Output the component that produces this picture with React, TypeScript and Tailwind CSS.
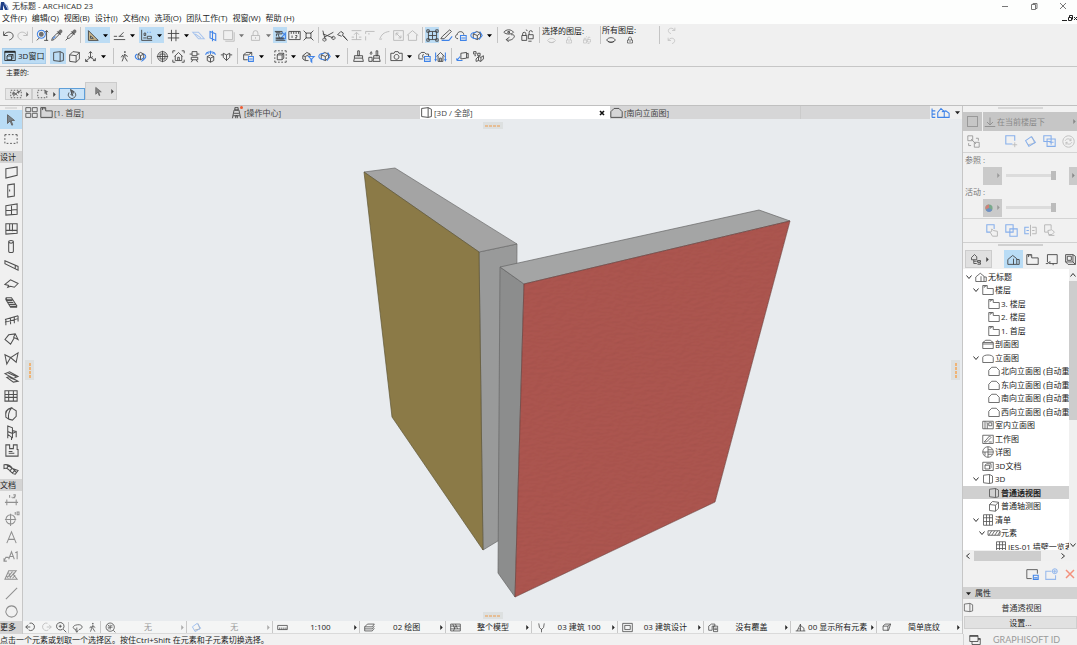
// src/App.tsx
import React from "react";
import clsx from "clsx";

// [main strokes, blue strokes, filled shapes]
const ICONS: Record<string, [string, string?, string?]> = {
  undo: ["M2 3v5h5M2.500 7.500C5 3.500 9 3 12 5c3 2.500 2 7-3 8.500"],
  redo: ["M14 3v5H9M13.500 7.500C11 3.500 7 3 4 5c-3 2.500-2 7 3 8.500"],
  find: ["M13 2v12M11 4l2-2 2 2M10 14h5M1 14l3-3", "M6.500 1.500a5 5 0 1 0 .1 0z", "M6.500 3.500a3 3 0 1 0 .1 0z"],
  dropper: ["M2 14l1-3 6-6 2 2-6 6zM9 3l4 4", "M3.500 12l3-3", "M9 4l3-3c2-1 4 1 3 3l-3 3z"],
  syringe: ["M2 14l3-3M4 10l5-5 2 2-5 5zM9 3l4 4", "", "M9 4l3-3c2-1 4 1 3 3l-3 3z"],
  setsquare: ["M3 2v12h12zM5.500 8.500v3H9z"],
  snap: ["M1 13h14M1 9h4M8 9l5-5M7 9h6"],
  coord: ["M2 1v13h13M5 5h2v3H5zM9 9h5v3H9zM4 11h4", "M9 4h1M12 4h1"],
  hash: ["M5.500 1v14M11 1v14M1 5.500h14M1 11h14"],
  planeH: ["", "M1 4h7l7 8H8zM4 6l7 5"],
  planeV: ["", "M5 3l7 3v8l-7-3zM8 2v13"],
  square: ["M2 2h11v11H2zM4 15h11V4"],
  lock: ["M3 8h10v6H3zM5 8V5a3 3 0 0 1 6 0v3M8 10v2"],
  trace: ["M1 3h9v3H3v3M3 12h10M2 14h12M5 6l2 6", "M10 4l4 4M14 4v8H8l6-7", "M2 10h10v3H2zM2 3h6v2H2z"],
  ruler: ["M1 3h14v10H1zM4 3v3M7 3v3M10 3v3M13 3v3M5 8v3M9 8h2v1.500L9 11h2"],
  collapse: ["M2 2l4 4M14 2l-4 4M2 14l4-4M14 14l-4-4M5 5h6v6H5z"],
  scissors: ["M1 2l3 11M1 6l13 5M14 4L3 10M3 11a2 2 0 1 0 .1 0zM14 9a2 2 0 1 0 .1 0z"],
  pick: ["M2 7l4-4 3 2-1 3 6 6M2 7l5 2M9 8l5 6"],
  elevate: ["M2 2h12M8 13V5M5 7l3-3 3 3M2 10h3M11 10h3M2 13h12"],
  corner: ["M2 6V3h11M2 14V9M5 6h2"],
  arc: ["M2 13C4 7 7 4 14 3M3 13l2-1"],
  resize: ["M2 2h12v12H2zM5 5l6 6M5 8V5h3M11 8v3H8"],
  home: ["M1 8l7-6 7 6M3 7v7h10V7"],
  group: ["M3 3h10v10H3zM1 1h3v3H1zM12 1h3v3h-3zM1 12h3v3H1zM12 12h3v3h-3zM8 3v10M3 8h10"],
  pens: ["M1 12h4l9-9-2-2-9 8z", "M2 14h9l4-5"],
  cloud: ["M5 12C1 12 1 7 4 7c0-5 8-5 8 0", "M8 8h7v6H8zM9 11h5"],
  orbit: ["M4 6l4-3 5 2v5l-4 3-5-2zM4 6l5 2 4-3M9 8v5", "M8 4c-5 0-7 2-7 4s3 4 7 4M12 3l3 5-4 5"],
  eyeSwap: ["M1 4c3-4 9-4 12 0-3 3-9 3-12 0zM6 3h2v2H6zM4 13c4 2 9 0 10-4 0-2-2-2-4-2M4 13l4-3M4 13l3 3"],
  lockSwap: ["M1 8h6v6H1zM2 8V6a2 2 0 0 1 4 0v2M9 7h6v5H9zM10 7V4a2 2 0 0 1 4 0M8 2L6 1M9 15h4"],
  eye: ["M1 8c3-5 11-5 14 0-3 5-11 5-14 0zM3 10c3 2 7 2 10 0"],
  window3d: ["M1 2h14v12H1zM4 8l2-2h6v5l-2 2H4zM4 8h6v5M10 8l2-2", "", "M1 1h14v3H1z"],
  perspective: ["M2 3l8-1v12l-8-1zM10 2l4 2v9l-4 1"],
  axono: ["M2 6l4-4 8 1v8l-4 4-8-1zM2 6l8 1v8M10 7l4-4"],
  axes: ["M8 9V2M6 4l2-2 2 2M8 9l-6 5M8 9l6 4M2 11v3h3M14 10v3h-3M5 8a4 4 0 0 0 6 0"],
  walk: ["M8 2h1v1H8zM8.500 5L6 9M8.500 5v4l3 5M7 9l-2 5M6 6L4 9M9 6l3 2"],
  orbitBox: ["M5 5l3-2 4 2v5l-4 2-3-2zM5 5l3 2 4-2M8 7v5", "M4 5C0 7 1 11 7 12M12 5c4 2 3 5-1 7M9 14l3-2-2-2"],
  target: ["M8 2a6 6 0 1 0 .1 0zM1 8h14M8 1v14M5 5h6v6H5z"],
  fitHome: ["M1 4V1h3M12 1h3v3M1 12v3h3M15 12v3h-3M3 8l5-5 5 5M4 7v6h8V7M7 13V9h2v4"],
  person: ["M5 2h6v5H5zM2 5h3M11 5h3M4 9h8v3H4zM6 12l-2 3M10 12l2 3"],
  lamp: ["M4 8l4-2 4 2v5l-4 2-4-2zM4 8l4 2 4-2M8 10v5", "M2 6C3 1 13 1 14 6M5 2v3M8 1v4M11 2v3"],
  section: ["M1 6h3M12 6h3M4 4l4 2 4-2v5l-4 4-4-4zM8 6v7"],
  cubeBlue: ["M2 6l3-3h7v4M2 6h6M2 6v6h5M8 6l4-3", "M8 8h6v6H8zM9 11h4"],
  dashedCube: ["M1 1h2M5 1h2M9 1h2M13 1h2v2M15 5v2M15 9v2M15 13v2h-2M11 15H9M7 15H5M3 15H1v-2M1 11V9M1 7V5M1 3V1M4 6l2-2h6v6l-2 2H4zM4 6h6v6M10 6l2-2"],
  filterHouse: ["M1 7l5-4 4 2v3M1 7l3 1v5l-3-2zM4 8l6-3M4 13h4", "M8 8h7l-3 3v4l-1-1v-3z"],
  brush: ["M7 1h2v6H7zM3 7h10v3H3zM3 10l-1 4h12l-1-4"],
  brushes: ["M4 2c-4 4 3 5 0 0zM10 1h2v6h-2zM7 7h7v3H7zM7 10l-1 4h9l-1-4M1 9h4v5H1z"],
  camera: ["M1 4h4l1-2h4l1 2h4v9H1zM8 5.500a3 3 0 1 0 .1 0z"],
  cameraBlue: ["M1 6l3-3h4l2 2h3v3M1 6v5h5M7 5a3 3 0 0 0 0 5", "M8 8h7v6H8zM9 11h5"],
  houseBlue: ["M3 8l5-5 5 5M5 7v7h6V7M7 14v-4h2v4", "M2 3v9M14 3v9M1 11l1 2 1-2M13 11l1 2 1-2"],
  camcorder: ["M6 4l7-1v7l-7 1zM13 5l2-1v6l-2-1", "M1 13l4-5M1 13h7M1 10v3"],
  cubes: ["M2 2h3v3H2zM7 4h3v3H7zM3 7h2M5 11l3-3 3 1 3-2v4l-3 3-3-1-3 1zM8 8v5M11 9v5"],
  marqueeCut: ["M1 3h2M5 3h2M9 3h2M13 3h2M1 13h2M5 13h2M9 13h2M13 13h2M1 5v2M1 9v2M15 5v2M15 9v2M4 5l6 5M4 11l7-6", "", "M3 6h3v3H3zM10 4h4l-3 4z"],
  marqueeArrow: ["M1 3h2M5 3h2M9 3h1M1 5v2M1 9v2M1 13h2M5 13h2M9 13h2M13 13v-2", "", "M10 2l5 3-2 1 1 3-2 0-1-2-1 1z"],
  magnet: ["M4 6a5 5 0 1 0 8 0M6 8l3 3M8 9L6 2l5 3z", "", "M6 2l5 3-3 2 2 3-1 1-2-4z"],
  grid4: ["M1 2h6v5H1zM9 2h6v5H9zM1 9h6v5H1zM9 9h6v5H9z"],
  story: ["M1 2h6v4h8v8H1zM3 2v3M5 2v2"],
  tower: ["M6 2h4v3H6zM5 5h6l2 10M5 5L3 15M5 9h6M4 12h8M7 15v-3h2v3"],
  elevation: ["M1 7c1-4 13-4 14 0v7H1z"],
  elevHouse: ["M1 7l4-4h6l4 4v7H1z"],
  sectionIcon: ["M1 6l4-3h6l4 3v8H1zM1 6h14M1 8h14"],
  homes: ["M1 8l6-5 5 4v7H1zM8 7v7M12 8h3v6h-3"],
  homesBlue: ["", "M-3 3v11M-3 6h4M-3 10h4M-3 14h4M4 14V8l4-5 4 4v7zM9 7l5-1 4 3v5h-6"],
  marquee: ["M1 3h2M5 3h2M9 3h2M13 3h2v2M15 7v2M15 11v2M13 13h-2M9 13H7M5 13H3M1 13v-2M1 9V7M1 5V3"],
  wall: ["M2 4l12-2v9L2 14z"],
  door: ["M4 2l7-1v13l-7 1zM6 7v2"],
  windowTool: ["M2 4l12-2v11L2 14zM8 3v11M2 9l12-1"],
  cornerWin: ["M2 3h12v10l-12 1zM9 3v8M2 10h12M6 3v7"],
  column: ["M5 3c0-2 5-2 5 0v10c0 2-5 2-5 0zM5 3c1 2 4 2 5 0"],
  beam: ["M1 3l14 6v4L1 6zM12 8v4"],
  slab: ["M1 9l6-5 8 4-4 4-4-1-3 1 1-2z"],
  stair: ["M2 3h6l6 9M2 3l1 2h6M3 6h6M4 8h6M5 10h7M6 12h8M2 3v2l5 8h7"],
  railing: ["M1 7l14-4M1 10l14-4M2 7v6M7 5v7M11 4v7M15 3v6"],
  roof: ["M1 8l4-5 7-1 3 6-4-2-4 7zM12 2l-2 4"],
  shell: ["M1 4l6 3 8-5-2 10-6-5-4 7z"],
  skylight: ["M1 5l5-2 9 5-5 2zM3 9l3-1 9 5-5 1zM4 4l9 4M6 9l7 3"],
  curtain: ["M1 3h13v11H1zM1 7h13M1 10h13M5 3v11M10 3v11"],
  morph: ["M8 2c-5 1-7 5-6 10l3 2c-1-5 0-8 3-12zM8 2l5 3v6l-4 4-4-1"],
  chair: ["M4 1l5 2v6L4 7zM4 7v7M9 9l4-2v6M4 10l4 3v3M9 9v5M9 6l4 1"],
  zone: ["M2 2h4v4h4V2h4v5h1v7H2zM5 9h4M5 11h6"],
  mesh: ["M0 3c5-1 7 1 9 4l6 2-3 4c-3 0-4-2-6-4S3 6 0 7zM5 3L3 7M9 6l-3 4M12 8l-3 4M3 4c4 0 6 3 10 7"],
  dim: ["M1 10h14M3 7v6M13 7v6M6 2v3M8 4.500h1M10 2h2v1.500L10 5h2"],
  level: ["M7 4a5 5 0 1 0 .1 0zM1 9h12M7 3v13M12 1v3M14 1h2v3h-2z"],
  text: ["M3 14L8 2l5 12M5 10h6"],
  label: ["M0 14l2-4h3M0 11v3h3M5 12l3-8 3 8M6 9h4M12 5l2-1v8"],
  fill: ["M1 13l4-9h8l-3 4 4 5zM3 12l6-7M6 12l5-6M9 12l3-3M5 6l2 6M3 10l2 2"],
  line: ["M2 14L14 2"],
  circle: ["M8 2a6 6 0 1 0 .1 0z"],
  zoomBack: ["M6 3a5 5 0 1 1-1 9M1 8h6M4 5L1 8l3 3"],
  zoomFwd: ["M10 3a5 5 0 1 0 1 9M15 8H9M12 5l3 3-3 3"],
  zoomIn: ["M7 2a5 5 0 1 0 .1 0zM11 11l4 4M7 5v4M5 7h4"],
  turn: ["M6 11C0 10 0 5 8 4s9 6 2 7M7 8v6M5 12l2 3 2-3"],
  fit: ["M7.500 1.500a6 6 0 1 0 .1 0zM4 7.500h7M7.500 4v7M12 12l3 3M4 4l2 2M11 4L9 6M4 11l2-2"],
  scale: ["M1 5h14v6H1zM4 8v3M7 8v3M10 8v3M13 8v3"],
  layers: ["M1 7l4-4h10l-3 4zM1 10h11l3-4M1 13h11l3-4M1 7v6"],
  hatch: ["M1 3h14v10H1zM1 6h14M1 10h14M4 3l3 7M8 3l3 7M5 13l3-7"],
  pen: ["M4 2l1 6 3 3 3-3 1-6M8 10v5"],
  view: ["M1 2h14v12H1zM4 5h8v6H4z"],
  override: ["M1 6l4-3h5v3H6v6H1zM8 6h6v8H8zM9 9h4M9 11h4"],
  renov: ["M1 13h14M3 13l5-10v10M8 5l5 4v4M5 10h3"],
  cube: ["M3 6l3-3h8l-3 9H3zM3 6h7l4-3M10 6v7"],
  below: ["M8 2v9M4 8l4 4 4-4M1 14h14"],
  swapSel: ["M1 1h6v6H1zM9 9h6v6H9zM5 5l6 6M11 4h3v3M2 10v3h3"],
  movePlus: ["M12 9v6M9 12h6", "M9 11H1V1h11v6"],
  rotateSel: ["M5 12l8-2-3-8", "M2 7l7-5 5 7-8 5z"],
  copySel: ["", "M1 1h9v7H1zM5 5h10v9H5zM8 9h5M10 7v5"],
  reload: ["M8 1a7 7 0 1 0 .1 0zM4 7c1-3 6-3 7 0M12 9c-1 3-6 3-7 0M11 4v3H9M5 12V9h2"],
  hand: ["M8 15l-3-5 2-1V6l2 2 5 1v6z", "M5 10H1V1h9v5"],
  overlap: ["", "M1 1h9v9H1zM6 6h9v9H6z"],
  split: ["M8 1v14M10 4h5v8h-5M10 8h3", "M6 4H1v8h5M3 8h3"],
  shadow: ["M2 1h8v5M2 1v9h4M6 8l5-1 3 3-3 3H7zM7 14h7"],
  navTree: ["M2 6l4-4 3 3v4H2zM5 9v5h4M5 11h4M10 10h4v2h-4zM10 13h4v2h-4"],
  layout: ["M3 2h12v11H6M3 2v9l3 2v-3M1 13h3M10 13v2"],
  publish: ["M2 2h9v9H2zM11 2l3 2v10H5l-3-3M11 11l3 3M4 4h5v5H4z"],
  interior: ["M1 3h14v10H1zM4 3v10M6 5h1v8M9 5h4v4H9z"],
  worksheet: ["M1 3h14v11H1zM3 12l7-8 2 2-6 6zM9 12h4"],
  detail: ["M8 1a7 7 0 1 0 .1 0zM8 1v14M1 8h7M8 5h6M8 8h7M8 11h6M4 8v5"],
  doc3d: ["M1 3h14v11H1zM4 7l2-2h6v5l-2 2H4zM4 7h6v5"],
  table: ["M2 1h12v14H2zM2 5h12M2 10h12M6 1v14M10 1v14"],
  walls: ["M0 5h16v6H0zM1 11l4-6M5 11l4-6M9 11l4-6M13 11l3-5"],
  setView: ["M7 13H1V2h13v5", "M9 9h6v5H9zM10 12h4"],
  newView: ["", "M8 4H1v10h12V9M12 1a3 3 0 1 0 .1 0zM12 2v4M10 4h4"],
  remove: ["M2 2l12 12M14 2L2 14"],
  windows: ["M1 2h11v8H1zM4 10v4h11V6h-3", "", "M1 2h11v2H1zM12 6h3v2h-3z"],
  arrow: ["M4 2v10l3-3 2 5 1-.5-2-5h4z", "", "M4 2v10l3-3 2 5 1-.5-2-5h4z"],
};

function Icon({ name, className = "size-[13px]" }: { name: string; className?: string }) {
  const [main, blue, solid] = ICONS[name];
  return (
    <svg viewBox="0 0 16 16" fill="none" strokeWidth={1.1} className={clsx("shrink-0 overflow-visible", className)} aria-hidden="true">
      {name === "setsquare" && <path d="M3 2v12h12zM5.500 8.500v3H9z" fill="#c9b68c" fillRule="evenodd" />}
      {main && <path d={main} stroke="currentColor" />}
      {blue && <path d={blue} stroke="#3f83e8" strokeWidth={1.3} />}
      {solid && <path d={solid} fill="currentColor" fillOpacity={0.75} />}
    </svg>
  );
}

function Caret({ right, className }: { right?: boolean; className?: string }) {
  return (
    <svg viewBox="0 0 6 6" className={clsx("size-[5px] shrink-0", className)} fill="currentColor" aria-hidden="true">
      <path d={right ? "M1.500 0l3 3-3 3z" : "M0 1.500h6L3 5z"} />
    </svg>
  );
}

// "|" is a separator, "_" a small gap, ">" opens a menu, "*" is switched on, "~" is disabled
const ROW_1 = [
  "undo", "redo~", "|", "find", "dropper", "syringe", "|", "setsquare>*", "snap>", "coord>*", "hash>",
  "planeH~", "planeV", "square>~", "lock>~", "trace*", "ruler", "collapse", "|", "scissors", "pick",
  "elevate~", "corner~", "arc~", "resize~", "home~", "|", "group*", "pens", "cloud", "orbit>", "|",
];
const ROW_2 = [
  "perspective*", "axono", "axes>", "|", "walk", "orbitBox", "|", "target", "fitHome", "person", "lamp",
  "section", "|", "cubeBlue>", "_", "dashedCube>", "filterHouse", "orbit>", "|", "brush", "brushes", "|",
  "camera>", "cameraBlue", "houseBlue", "|", "camcorder", "cubes",
];

function ToolItems({ items, wide }: { items: string[]; wide?: boolean }) {
  return (
    <>
      {items.map((item, i) => {
        if (item === "|")
          return (
            <span key={i} className="w-[6px] shrink-0 flex justify-center">
              <span className="w-px h-4 bg-[#c4c4c4]" />
            </span>
          );
        if (item === "_") return <span key={i} className="w-1 shrink-0" />;
        const name = item.replace(/[>*~]/g, "");
        const menu = item.includes(">");
        return (
          <button
            key={i}
            aria-label={name}
            className={clsx(
              "flex items-center shrink-0 h-4",
              item.includes("*") && "bg-[#bcdcf4]",
              item.includes("~") ? "text-[#b8b8b8]" : "text-[#454545]",
              menu ? (wide ? "w-7" : "w-[25px] ml-[2px]") : wide ? "w-4" : "w-[14px]"
            )}
          >
            <span className={clsx("flex justify-center shrink-0", wide ? "w-4" : "w-[15px]", item === "planeH~" && "opacity-40")}>
              <Icon name={name} />
            </span>
            {menu && <Caret className={clsx("ml-[3px]", item.includes("~") ? "text-[#777]" : "text-black")} />}
          </button>
        );
      })}
    </>
  );
}

const MENUS = ["文件(F)", "编辑(Q)", "视图(B)", "设计(I)", "文档(N)", "选项(O)", "团队工作(T)", "视窗(W)", "帮助 (H)"];

function TitleBar() {
  return (
    <header className="bg-[#fdfefd] shrink-0">
      <div className="flex items-center h-3 text-[#333]">
        <svg viewBox="0 0 9 10" className="w-[9px] h-[10px] mr-[3px]" aria-hidden="true">
          <path d="M1 1h3l4 8H5L3 4v5H0z" fill="#1f3f86" />
          <path d="M4 3c3 0 4 3 4 6" stroke="#6f8cc4" fill="none" />
        </svg>
        <h1>无标题 - ARCHICAD 23</h1>
        <div className="ml-auto flex gap-[21px] pr-[10px] text-[#777]">
          <button aria-label="最小化">
            <svg viewBox="0 0 8 8" className="size-2" stroke="currentColor"><path d="M1 4.500h6" /></svg>
          </button>
          <button aria-label="还原">
            <svg viewBox="0 0 8 8" className="size-2" fill="none" stroke="currentColor"><path d="M1.500 2.500h4v5h-4zM3 2.500v-1h4v5H5.500" /></svg>
          </button>
          <button aria-label="关闭">
            <svg viewBox="0 0 8 8" className="size-2" stroke="currentColor"><path d="M1 1l6 6M7 1L1 7" /></svg>
          </button>
        </div>
      </div>
      <nav className="flex items-center h-3 pl-[2px] gap-[5px]">
        {MENUS.map((m) => (
          <button key={m} className="whitespace-nowrap">{m}</button>
        ))}
        <svg viewBox="0 0 16 7" className="ml-auto w-4 h-[7px]" fill="none" stroke="#222" aria-hidden="true">
          <path d="M1 5.500h5M7.500 2.500h3v3h-3zM8.500 2V.5h3v4M13 2l3 3M16 2l-3 3" />
        </svg>
      </nav>
    </header>
  );
}

function Toolbar() {
  return (
    <div className="shrink-0 bg-[#f0f0f0] border-b border-[#c6c6c6]">
      <div className="flex items-center h-[22px] pl-px">
        <ToolItems items={ROW_1} />
        <button aria-label="层可见性" className="w-[18px] flex justify-center text-[#454545]"><Icon name="eyeSwap" /></button>
        <button aria-label="层锁定" className="w-[18px] flex justify-center text-[#454545]"><Icon name="lockSwap" /></button>
        <ToolItems items={["|"]} />
        <div className="w-[58px]">
          <p className="leading-[10px]">选择的图层:</p>
          <div className="flex items-center justify-around pr-1 text-[#b4b4b4]">
            <Icon name="eye" className="size-[9px]" />
            <Icon name="lock" className="size-2" />
            <Icon name="lockSwap" className="size-2" />
          </div>
        </div>
        <span className="w-px h-[18px] bg-[#c4c4c4] mr-px" />
        <div className="w-[57px]">
          <p className="leading-[10px]">所有图层:</p>
          <div className="flex items-center gap-[10px] pl-1 text-[#222]">
            <Icon name="eye" className="size-[10px]" />
            <Icon name="lock" className="size-2" />
          </div>
        </div>
        <span className="w-px h-[18px] bg-[#c4c4c4]" />
        <div className="flex flex-col gap-px ml-[7px] text-[#b4b4b4]">
          <Icon name="redo" className="size-[9px]" />
          <Icon name="undo" className="size-[9px]" />
        </div>
      </div>
      <div className="flex items-center h-5 pl-[2px]">
        <button className="flex items-center gap-[2px] w-11 h-4 pl-px mr-1 bg-[#bcdcf4] border border-[#a9cdea] whitespace-nowrap">
          <Icon name="window3d" className="size-3" />
          3D窗口
        </button>
        <ToolItems items={ROW_2} wide />
      </div>
    </div>
  );
}

function InfoBar() {
  return (
    <div className="shrink-0 h-[39px] bg-[#f0f0f0] border-b border-[#c0c0c0] px-[5px]">
      <p className="text-[7px] leading-[10px] pt-px pl-px">主要的:</p>
      <div className="flex items-end pt-1 text-[#444]">
        <button aria-label="选择框" className="flex items-center justify-between w-[27px] h-3 pl-1 pr-px bg-[#e6e6e6] border border-[#ccc]">
          <Icon name="marqueeCut" className="size-3" />
          <Caret right />
        </button>
        <button aria-label="选择方法" className="flex items-center justify-between w-[27px] h-3 pl-1 pr-px bg-[#e6e6e6] border border-[#ccc]">
          <Icon name="marqueeArrow" className="size-3" />
          <Caret right />
        </button>
        <button aria-label="磁性" className="flex items-center justify-center w-[26px] h-3 bg-[#c9e3f8] border border-[#5f9fd8]">
          <Icon name="magnet" className="size-3" />
        </button>
        <button aria-label="箭头" className="flex items-center justify-between w-8 h-[18px] pl-[7px] pr-px bg-[#e0e0e0] border border-[#ccc]">
          <Icon name="arrow" className="size-[11px] text-[#666]" />
          <Caret right />
        </button>
      </div>
    </div>
  );
}

const DESIGN = [
  "wall", "door", "windowTool", "cornerWin", "column", "beam", "slab", "stair", "railing",
  "roof", "shell", "skylight", "curtain", "morph", "chair", "zone", "mesh",
];
const DOCUMENT = ["dim", "level", "text", "label", "fill", "line", "circle"];

function Toolbox() {
  const tool = (name: string, color: string) => (
    <button key={name} aria-label={name} className={clsx("flex-1 min-h-0 flex items-center justify-center", color)}>
      <Icon name={name} className="size-[15px]" />
    </button>
  );
  return (
    <aside className="w-[23px] shrink-0 flex flex-col bg-[#f0f0f0] border-r border-[#c6c6c6]">
      <span className="w-3 h-[2px] bg-[#dcdcdc] mx-auto my-px shrink-0" />
      <button aria-label="箭头" className="h-[19px] shrink-0 bg-[#b9dcf5] flex items-center justify-center text-[#666]">
        <Icon name="arrow" className="size-[14px]" />
      </button>
      <button aria-label="选取框" className="h-[22px] pb-[3px] shrink-0 flex items-center justify-center text-[#555]">
        <Icon name="marquee" className="size-[14px]" />
      </button>
      <h2 className="h-3 shrink-0 bg-[#d4d4d4] leading-3">设计</h2>
      {DESIGN.map((name) => tool(name, "text-[#505050]"))}
      <h2 className="h-3 shrink-0 bg-[#d4d4d4] leading-3">文档</h2>
      {DOCUMENT.map((name) => tool(name, "text-[#909090]"))}
      <button className="h-[13px] shrink-0 bg-[#d4d4d4] text-left leading-3">更多</button>
    </aside>
  );
}

const TABS = [
  { icon: "story", label: "[1. 首层]" },
  { icon: "tower", label: "[操作中心]", alert: true },
  { icon: "perspective", label: "[3D / 全部]", active: true },
  { icon: "elevHouse", label: "[南向立面图]" },
];

function Tabs() {
  return (
    <div className="flex h-[13px] shrink-0 bg-[#d6d6d7]">
      <button aria-label="标签总览" className="w-[17px] shrink-0 flex items-center justify-center bg-[#e6e7e8] text-[#555]">
        <Icon name="grid4" />
      </button>
      {TABS.map((tab) => (
        <div
          key={tab.label}
          className={clsx("flex items-center basis-[190px] min-w-0 pr-[5px]", tab.active ? "bg-white" : "bg-[#d6d6d7]")}
        >
          <button className="flex items-center flex-1 gap-px text-[#444] whitespace-nowrap">
            <span className="relative">
              <Icon name={tab.icon} />
              {tab.alert && <span className="absolute right-0 top-0 size-[3px] rounded-full bg-[#ee5a30]" />}
            </span>
            {tab.label}
          </button>
          {tab.active && (
            <button aria-label="关闭标签">
              <svg viewBox="0 0 6 6" className="size-[6px]" stroke="#111" strokeWidth={1.600}><path d="M1 1l4 4M5 1L1 5" /></svg>
            </button>
          )}
        </div>
      ))}
      <span className="flex-1 border-l border-[#cbcbcb]" />
      <button aria-label="弹出式导航器" className="w-8 shrink-0 flex items-center justify-between px-[2px] bg-[#f0f0f0]">
        <Icon name="homesBlue" className="w-[18px] h-[13px]" />
        <Caret />
      </button>
    </div>
  );
}

// dotted grip on each edge of the view
function Handle({ vertical, className }: { vertical?: boolean; className: string }) {
  return (
    <span
      className={clsx(
        "absolute flex items-center justify-center gap-px bg-[#dde0e0]",
        vertical ? "flex-col w-[9px] h-5 top-1/2 -translate-y-1/2" : "w-5 h-[7px] left-1/2 -translate-x-1/2",
        className
      )}
    >
      {[0, 1, 2, 3].map((i) => (
        <span key={i} className={vertical ? "w-[2px] h-[3px] bg-[#efb476]" : "w-[3px] h-[2px] bg-[#e6bd94]"} />
      ))}
    </span>
  );
}

function Viewport() {
  return (
    <main className="relative flex-1 min-h-0 bg-[#e8ebee]">
      <svg viewBox="23 119 939 502" className="w-full h-full" aria-label="3D">
        <defs>
          <filter id="grain" x="0" y="0" width="100%" height="100%">
            <feTurbulence type="fractalNoise" baseFrequency="0.15 0.35" numOctaves="3" seed="4" result="noise" />
            <feDiffuseLighting in="noise" lightingColor="#fff" surfaceScale="0.3" result="light">
              <feDistantLight azimuth="60" elevation="70" />
            </feDiffuseLighting>
            <feComposite in="SourceGraphic" in2="light" operator="arithmetic" k1="1.065" result="lit" />
            <feComposite in="lit" in2="SourceGraphic" operator="in" />
          </filter>
        </defs>
        <g strokeWidth={0.7} strokeLinejoin="round">
          <path d="M479 252L517 244 516 530 483 550z" fill="#999a9a" stroke="#6c6c6c" />
          <path d="M364 172L395 168 517 244 479 252z" fill="#a4a4a4" stroke="#6c6c6c" />
          <path d="M364 172L479 252 483 550 392 417z" fill="#8b7a47" stroke="#5f5636" />
          <path d="M500 267L524 284 515 597 498 573z" fill="#8c8d8d" stroke="#666" />
          <path d="M500 267L759 210 790 221 524 284z" fill="#a4a5a5" stroke="#666" />
          <path d="M524 284L790 221 715 502 515 597z" fill="#aa544e" filter="url(#grain)" />
          <path d="M524 284L790 221 715 502 515 597z" fill="none" stroke="#74403c" />
        </g>
      </svg>
      <Handle className="top-[3px]" />
      <Handle className="bottom-[2px]" />
      <Handle vertical className="left-[2px]" />
      <Handle vertical className="right-[2px]" />
    </main>
  );
}

const OPTIONS = [
  { icon: "fit", label: "无", off: true },
  { icon: "rotateSel", label: "无", off: true },
  { icon: "scale", label: "1:100" },
  { icon: "layers", label: "02 绘图" },
  { icon: "hatch", label: "整个模型" },
  { icon: "pen", label: "03 建筑 100" },
  { icon: "view", label: "03 建筑设计" },
  { icon: "override", label: "没有覆盖" },
  { icon: "renov", label: "00 显示所有元素" },
  { icon: "cube", label: "简单底纹" },
];

function QuickOptions() {
  return (
    <div className="flex items-center h-[13px] shrink-0 bg-[#f4f5f5] border-b border-[#dadada] text-[#444]">
      <div className="flex items-center gap-[3px] w-[45px] pl-[2px] shrink-0">
        <button aria-label="上一缩放"><Icon name="zoomBack" className="size-3" /></button>
        <button aria-label="下一缩放" className="text-[#bbb]"><Icon name="zoomFwd" className="size-3" /></button>
        <button aria-label="放大"><Icon name="zoomIn" className="size-3" /></button>
      </div>
      <div className="flex items-center gap-1 w-8 pl-[3px] shrink-0 border-l border-[#c8c8c8]">
        <button aria-label="环绕"><Icon name="turn" className="size-[11px]" /></button>
        <button aria-label="漫游"><Icon name="walk" className="size-[11px]" /></button>
      </div>
      {OPTIONS.map((o) => (
        <button
          key={o.icon}
          className="flex items-center flex-1 basis-0 min-w-0 h-full pl-1 pr-px border-l border-[#c8c8c8]"
        >
          <Icon name={o.icon} className={clsx("size-[11px]", o.icon === "rotateSel" && "opacity-50")} />
          <span className={clsx("flex-1 text-center whitespace-nowrap", o.off ? "text-[#999]" : "text-[#222]")}>{o.label}</span>
          <Caret right className={o.off ? "text-[#aaa]" : "text-[#222]"} />
        </button>
      ))}
    </div>
  );
}

function TraceRow({ label, color }: { label: string; color?: boolean }) {
  return (
    <div>
      <label htmlFor={label} className="block h-[13px] leading-[14px] pl-[2px] text-[#777]">{label} :</label>
      <div className="flex items-center h-[19px] pl-[20px]">
        <button aria-label={label + "颜色"} className="flex items-center justify-end gap-[3px] w-[19px] h-[18px] pr-px bg-[#cacaca] text-[#999] shrink-0">
          {color && (
            <svg viewBox="0 0 10 10" className="size-2" aria-hidden="true">
              <circle cx="5" cy="5" r="4.500" fill="#79a98b" />
              <path d="M5 5L1 7a4.500 4.500 0 0 1 4-6.500z" fill="#cf7f78" />
              <path d="M5 5L1 7.500a4.500 4.500 0 0 0 8 0z" fill="#6f8fc4" />
            </svg>
          )}
          <Caret right />
        </button>
        <input
          id={label}
          type="range"
          disabled
          defaultValue={100}
          className="appearance-none w-[50px] h-[3px] mx-1 bg-[#dcdcdc] shrink-0 [&::-webkit-slider-thumb]:appearance-none [&::-webkit-slider-thumb]:w-[5px] [&::-webkit-slider-thumb]:h-[9px] [&::-webkit-slider-thumb]:bg-[#bcbcbc]"
        />
        {!color && (
          <button aria-label="更多" className="ml-auto w-2 h-[18px] flex items-center justify-center bg-[#cacaca] text-[#888]">
            <Caret right />
          </button>
        )}
      </div>
    </div>
  );
}

const TREE = [
  { level: 0, icon: "homes", label: "无标题", open: true },
  { level: 1, icon: "story", label: "楼层", open: true },
  { level: 2, icon: "story", label: "3. 楼层" },
  { level: 2, icon: "story", label: "2. 楼层" },
  { level: 2, icon: "story", label: "1. 首层" },
  { level: 1, icon: "sectionIcon", label: "剖面图" },
  { level: 1, icon: "elevation", label: "立面图", open: true },
  { level: 2, icon: "elevHouse", label: "北向立面图 (自动重" },
  { level: 2, icon: "elevHouse", label: "东向立面图 (自动重" },
  { level: 2, icon: "elevHouse", label: "南向立面图 (自动重" },
  { level: 2, icon: "elevHouse", label: "西向立面图 (自动重" },
  { level: 1, icon: "interior", label: "室内立面图" },
  { level: 1, icon: "worksheet", label: "工作图" },
  { level: 1, icon: "detail", label: "详图" },
  { level: 1, icon: "doc3d", label: "3D文档" },
  { level: 1, icon: "perspective", label: "3D", open: true },
  { level: 2, icon: "perspective", label: "普通透视图", selected: true },
  { level: 2, icon: "axono", label: "普通轴测图" },
  { level: 1, icon: "table", label: "清单", open: true },
  { level: 2, icon: "walls", label: "元素", open: true },
  { level: 3, icon: "table", label: "IES-01 墙壁一览表" },
];
const INDENT = ["pl-[3px]", "pl-[10px]", "pl-[16px]", "pl-[23px]"];

function Chevron({ className }: { className?: string }) {
  return (
    <svg viewBox="0 0 6 6" className={clsx("size-[6px] shrink-0", className)} fill="none" stroke="#333" aria-hidden="true">
      <path d="M.5 1.500L3 4.500l2.500-3" />
    </svg>
  );
}

function Navigator() {
  return (
    <>
      <div className="flex items-center h-5 shrink-0 pl-[2px] text-[#444]">
        <button aria-label="项目选择" className="flex items-center justify-between w-[27px] h-[18px] pl-1 pr-px mr-3 bg-[#e0e0e0] border border-[#ccc] shrink-0">
          <Icon name="navTree" className="size-3" />
          <Caret right />
        </button>
        {["homes", "story", "layout", "publish"].map((name, i) => (
          <button
            key={name}
            aria-label={name}
            className={clsx("flex items-center justify-center w-[19px] h-[18px] shrink-0", i === 0 && "bg-[#b9dcf5]")}
          >
            <Icon name={name} />
          </button>
        ))}
      </div>
      <div className="flex flex-1 min-h-0 basis-0 bg-white">
        <ul className="flex-1 min-w-0 overflow-hidden pt-px">
          {TREE.map((node) => (
            <li key={node.label} className="odd:h-[13px] even:h-[14px]">
              <button
                className={clsx(
                  "flex items-center w-full h-full whitespace-nowrap",
                  INDENT[node.level],
                  node.selected && "bg-[#d0d0d0] font-bold"
                )}
              >
                {node.open ? <Chevron /> : <span className="w-[6px] shrink-0" />}
                <Icon name={node.icon} className="size-3 ml-[3px] mr-px text-[#555]" />
                {node.label}
              </button>
            </li>
          ))}
        </ul>
        <div className="w-2 shrink-0 flex flex-col items-center bg-[#f0f0f0]">
          <Chevron className="rotate-180 my-[3px]" />
          <span className="w-full h-[139px] bg-[#cdcdcd]" />
          <Chevron className="mt-auto mb-[2px]" />
        </div>
      </div>
      <div className="flex items-center h-[11px] shrink-0 bg-[#f0f0f0] pl-[2px] pr-[11px]">
        <Chevron className="rotate-90" />
        <span className="w-[67px] h-[10px] bg-[#cdcdcd] ml-[3px]" />
        <Chevron className="-rotate-90 ml-auto" />
      </div>
      <div className="flex items-center justify-end gap-[6px] h-[26px] pr-px shrink-0 text-[#555]">
        <button aria-label="保存视图"><Icon name="setView" /></button>
        <button aria-label="新建视图" className="opacity-50"><Icon name="newView" /></button>
        <button aria-label="删除">
          <svg viewBox="0 0 12 12" className="size-3" stroke="#f4907c" strokeWidth={1.5}><path d="M2 2l8 8M10 2l-8 8" /></svg>
        </button>
      </div>
      <h2 className="flex items-center gap-1 h-3 shrink-0 pl-[3px] bg-[#d2d2d2]"><Caret />属性</h2>
      <div className="flex items-center h-[17px] shrink-0 text-[#333]">
        <Icon name="perspective" className="size-[11px] text-[#555]" />
        <span className="flex-1 text-center pr-2">普通透视图</span>
      </div>
      <button className="h-[13px] mb-[5px] ml-px shrink-0 bg-[#e1e1e1] border border-[#cfcfcf] leading-[11px]">设置...</button>
    </>
  );
}

function SidePanel() {
  return (
    <aside className="w-[114px] shrink-0 flex flex-col overflow-hidden bg-[#f1f1f1]">
      <span className="w-[45px] h-[2px] bg-[#d8d8d8] mx-auto mt-px mb-[3px] shrink-0" />
      <div className="flex h-[19px] shrink-0 text-[#999]">
        <button aria-label="描绘" className="w-[19px] h-full flex items-center justify-center bg-[#c6c6c6] mr-px">
          <span className="size-[11px] border border-[#999]" />
        </button>
        <button className="flex-1 flex items-center gap-px pl-px bg-[#c6c6c6] text-[#888] whitespace-nowrap">
          <Icon name="below" className="size-3" />
          在当前楼层下
          <Caret right className="ml-auto" />
        </button>
      </div>
      <div className="flex items-center h-[22px] shrink-0 pl-1 pr-[2px] border-b border-[#d4d4d4] text-[#999]">
        <Icon name="swapSel" />
        <span className="flex gap-[6px] ml-auto opacity-60">
          {["movePlus", "rotateSel", "copySel", "reload"].map((n) => <Icon key={n} name={n} />)}
        </span>
      </div>
      <TraceRow label="参照" />
      <TraceRow label="活动" color />
      <div className="h-[2px] shrink-0 border-b border-[#d4d4d4]" />
      <div className="flex items-center h-6 shrink-0 border-b border-[#d0d0d0] text-[#888]">
        <span className="flex gap-[6px] pl-[23px] opacity-60">
          {["hand", "overlap", "split", "shadow"].map((n) => <Icon key={n} name={n} />)}
        </span>
      </div>
      <span className="w-[45px] h-[2px] bg-[#d0d0d0] mx-auto mt-px mb-[3px] shrink-0" />
      <Navigator />
    </aside>
  );
}

export default function App() {
  return (
    <div className="h-screen flex flex-col overflow-hidden bg-[#f0f0f0] text-[8px] leading-[12px] text-[#222] font-['Open_Sans','Noto_Sans_CJK_SC',sans-serif]">
      <TitleBar />
      <Toolbar />
      <InfoBar />
      <div className="flex flex-1 min-h-0">
        <Toolbox />
        <div className="flex-1 min-w-0 flex flex-col border-r border-[#c6c6c6]">
          <Tabs />
          <Viewport />
          <QuickOptions />
        </div>
        <SidePanel />
      </div>
      <footer className="flex items-center h-[11px] shrink-0 bg-[#f1f1f1]">
        <p className="flex-1 whitespace-nowrap">点击一个元素或划取一个选择区。按住Ctrl+Shift 在元素和子元素切换选择。</p>
        <div className="flex items-center gap-3 w-[114px] pl-[5px] border-l border-[#d4d4d4]">
          <Icon name="windows" className="size-3 text-[#444]" />
          <span className="font-[Lato] text-[9px] text-[#9a9a9a] whitespace-nowrap">GRAPHISOFT ID</span>
        </div>
      </footer>
    </div>
  );
}
